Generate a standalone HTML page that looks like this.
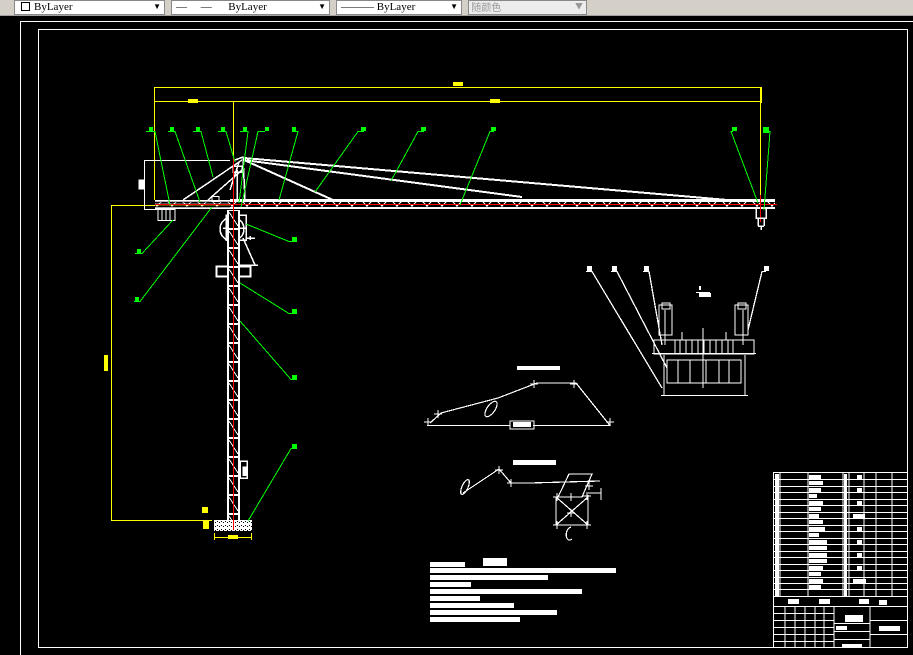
<!DOCTYPE html>
<html><head><meta charset="utf-8"><style>
html,body{margin:0;padding:0;width:913px;height:655px;overflow:hidden;background:#000;font-family:"Liberation Sans","Noto Sans CJK SC",sans-serif}
.tb{position:absolute;left:0;top:0;width:913px;height:15px;background:#d4d0c8;border-bottom:1px solid #a0a0a0}
.dd{position:absolute;top:0;height:13px;background:#fff;border:1px solid #888;font:11px "Liberation Serif",serif;line-height:12px;color:#000}
.ar{position:absolute;right:3px;top:0;font-size:8px}
svg{shape-rendering:crispEdges}
</style></head><body>
<div class="tb">
 <div class="dd" style="left:14px;width:149px"><span style="display:inline-block;width:7px;height:7px;border:1px solid #000;margin:0 4px 0 6px;vertical-align:-1px"></span>ByLayer<span class="ar">▼</span></div>
 <div class="dd" style="left:171px;width:157px"><span style="margin-left:4px">—&nbsp;&nbsp;&nbsp;&nbsp;&nbsp;—&nbsp;&nbsp;&nbsp;&nbsp;&nbsp;&nbsp;ByLayer</span><span class="ar">▼</span></div>
 <div class="dd" style="left:336px;width:124px"><span style="margin-left:4px">———&nbsp;ByLayer</span><span class="ar">▼</span></div>
 <div class="dd" style="left:468px;width:117px;background:#ececec;color:#999;font-family:'Noto Sans CJK SC',sans-serif;font-size:10px">&nbsp;随颜色<span class="ar">▼</span></div>
</div>
<svg width="913" height="655" style="position:absolute;left:0;top:0" xmlns="http://www.w3.org/2000/svg">
<defs>
<pattern id="tw" x="227" y="0" width="13" height="19" patternUnits="userSpaceOnUse">
<rect x="0" y="0" width="13" height="19" fill="#000"/>
<rect x="0" y="0" width="2" height="19" fill="#fff"/>
<rect x="11" y="0" width="2" height="19" fill="#fff"/>
<rect x="0" y="0" width="13" height="2" fill="#fff"/>
<line x1="2" y1="3" x2="11" y2="17" stroke="#fff"/>
<line x1="6" y1="2" x2="6" y2="19" stroke="#fff" stroke-width="0.6"/>
</pattern>
<pattern id="jb" x="0" y="200" width="15" height="9" patternUnits="userSpaceOnUse">
<rect width="15" height="9" fill="#000"/>
<rect x="0" y="0" width="15" height="2" fill="#fff"/>
<rect x="0" y="7" width="15" height="2" fill="#fff"/>
<path d="M3 2 L7 6 L11 2 M7 6 V8" stroke="#fff" fill="none"/>
</pattern>
<pattern id="ht" width="4" height="4" patternUnits="userSpaceOnUse"><rect width="4" height="4" fill="#fff"/><rect x="1" y="1" width="1" height="1" fill="#000"/><rect x="3" y="2" width="1" height="1" fill="#000"/></pattern>
</defs>
<path d="M20.5 655 V21.5 H913" stroke="#fff" fill="none"/>
<rect x="38.5" y="29.5" width="869" height="618" stroke="#fff" fill="none"/>
<g stroke="#ff0" fill="none">
<path d="M154.5 200 V87.5 H761.5 V103"/>
<path d="M154 101.5 H762"/>
<path d="M233.5 101 V205"/>
<path d="M760.5 87 V205"/>
<path d="M111.5 520 V205.5 H233"/>
<path d="M111 520.5 H212"/>
<path d="M214 537.5 H252 M214.5 533 V540 M251.5 533 V540"/>
</g>
<g fill="#ff0">
<rect x="453" y="82" width="10" height="4"/><rect x="188" y="99" width="10" height="4"/><rect x="490" y="99" width="10" height="4"/>
<rect x="228" y="535" width="10" height="4"/><rect x="202" y="507" width="6" height="6"/><rect x="203" y="521" width="6" height="8"/>
<rect x="104" y="355" width="4" height="16"/>
</g>
<g stroke="#fff" fill="none">
<path d="M144 160.5 H230 M144.5 160 V209 M144 209.5 H160"/>
<rect x="139" y="180" width="5" height="9" fill="#fff"/>
<rect x="158" y="209.5" width="17" height="11"/>
<path d="M162 210 V220 M166 210 V220 M170 210 V220"/>
<path d="M155 200.5 H230 M155 208.5 H230 M155 203.5 H230"/>
<rect x="212" y="196.5" width="7" height="5"/>
<path d="M183 200 L242 160 M208 200 L242 170" stroke-width="1.5"/>
<path d="M244 158 L762 203 M244 160 L333 200 M244 160 L522 197" stroke-width="2"/>
</g>
<rect x="230" y="199" width="545" height="10" fill="url(#jb)"/>
<rect x="155" y="200" width="75" height="9" fill="url(#jb)" opacity="0.7"/>
<g stroke="#fff" fill="none" stroke-width="1.5">
<path d="M235 160 L243 157 L245 200 M237 170 V200 M239 162 L230 190"/>
<rect x="233" y="166" width="9" height="6"/>
<circle cx="232" cy="229" r="12"/>
<rect x="226" y="215" width="20" height="25"/>
<path d="M223 228 H246 M243 238 L255 265 M240 265 H258"/>
<rect x="216.5" y="266.5" width="34" height="10" stroke-width="2"/>
<path d="M246 238 H255 M250 236 V240"/>
<rect x="240" y="461" width="7" height="17"/><rect x="243" y="467" width="3" height="8" fill="#fff"/>
</g>
<rect x="227" y="210" width="13" height="311" fill="url(#tw)"/>
<rect x="214" y="520" width="38" height="11" fill="url(#ht)"/>
<path d="M155 204.5 H777 M233.5 158 V530 M760.5 195 V222" stroke="#f00" stroke-width="1.2"/>
<path d="M756 209 V218 H766 V209 M758 218 V226 M764 218 V226 M758 226 H764 M761 226 V230" stroke="#fff" fill="none" stroke-width="1.5"/>
<g stroke="#0f0" fill="none">
<path d="M146 131.5 H155 L170 205"/><path d="M168 131.5 H175 L200 202"/><path d="M193 131.5 H201 L213 177"/>
<path d="M218 131.5 H226 L235 162"/><path d="M240 131.5 H248 L239 203"/><path d="M265 131.5 H258 L241 207"/>
<path d="M292 131.5 H298 L279 200"/><path d="M364 131.5 H358 L315 192"/><path d="M424 131.5 H418 L391 181"/>
<path d="M494 131.5 H490 L460 205"/><path d="M733 131.5 H731 L758 203"/><path d="M768 131.5 H770 L764 210"/>
<path d="M135 253.5 H142 L173 220"/><path d="M134 301.5 H140 L212 207"/>
<path d="M297 241.5 H289 L246 224"/><path d="M297 313.5 H289 L240 283"/><path d="M297 379.5 H291 L240 321"/><path d="M297 448.5 H291 L248 521"/>
</g>
<g fill="#0f0">
<rect x="149" y="127" width="4" height="4"/><rect x="170" y="127" width="4" height="4"/><rect x="196" y="127" width="4" height="4"/>
<rect x="221" y="127" width="4" height="4"/><rect x="243" y="127" width="4" height="4"/><rect x="265" y="127" width="4" height="4"/>
<rect x="292" y="127" width="4" height="4"/><rect x="361" y="127" width="5" height="4"/><rect x="421" y="127" width="5" height="4"/>
<rect x="491" y="127" width="5" height="4"/><rect x="732" y="127" width="5" height="4"/><rect x="763" y="127" width="6" height="6"/>
<rect x="137" y="249" width="4" height="4"/><rect x="135" y="297" width="4" height="4"/>
<rect x="292" y="237" width="5" height="5"/><rect x="292" y="309" width="5" height="5"/><rect x="292" y="375" width="5" height="5"/><rect x="292" y="444" width="5" height="5"/>
</g>
<g stroke="#fff" fill="none" stroke-width="1.3">
<path d="M586 271.5 H592 L662 388 M611 271.5 H617 L667 368 M643 271.5 H649 L662 345 M766 271.5 H762 L748 330"/>
<path d="M696 292.5 H710"/>
<rect x="659" y="305" width="13" height="30"/><rect x="735" y="305" width="13" height="30"/>
<rect x="662" y="303" width="8" height="6"/><rect x="738" y="303" width="8" height="6"/>
<rect x="654" y="340" width="100" height="14"/>
<path d="M675 340 V354 M680 340 V354 M686 340 V354 M692 340 V354 M698 340 V354 M704 340 V354 M710 340 V354 M716 340 V354 M722 340 V354 M728 340 V354 M733 340 V354"/>
<rect x="667" y="360" width="74" height="23"/>
<path d="M678 360 V383 M690 360 V383 M706 360 V383 M719 360 V383 M729 360 V383"/>
<path d="M661 395.5 H748 M664 355 V395 M745 355 V395 M703 328 V388 M665 310 V345 M743 310 V345"/>
<path d="M682 332 V340 M726 332 V340 M652 353.5 H756"/>
</g>
<g fill="#fff"><rect x="699" y="286" width="2" height="4"/><rect x="699" y="293" width="12" height="4"/><rect x="587" y="266" width="5" height="5"/><rect x="612" y="266" width="5" height="5"/><rect x="644" y="266" width="5" height="5"/><rect x="764" y="266" width="5" height="5"/></g>
<g fill="#fff"><rect x="517" y="366" width="43" height="4"/><rect x="513" y="460" width="43" height="5"/><rect x="513" y="422" width="18" height="5"/></g>
<g stroke="#fff" fill="none" stroke-width="1.2">
<path d="M427 425.5 H510 M533 425.5 H610 L576 383 H537 L498 398 L441 413 L430 423"/>
<rect x="510" y="421" width="24" height="8"/>
<ellipse cx="491" cy="409" rx="4" ry="9" transform="rotate(35 491 409)"/>
<path d="M463 493 L499 469 L511 483 H530 L600 481"/>
<ellipse cx="465" cy="487" rx="3" ry="8" transform="rotate(25 465 487)"/>
<path d="M569 474 H592 L582 497 H558 Z M556 497 V525 M588 495 V525 M556 525 H590 M556 497 L588 525 M588 497 L556 525 M588 493 H601 M601 488 V500"/>
<path d="M571 527 C563 530 566 544 572 539"/>
</g>
<g stroke="#fff" fill="none" stroke-width="0.8">
<path d="M424 422 h8 M428 418 v8 M434 414 h8 M438 410 v8 M530 384 h8 M534 380 v8 M570 384 h8 M574 380 v8 M606 422 h8 M610 418 v8 M495 470 h8 M499 466 v8 M507 483 h8 M511 479 v8 M553 497 h8 M557 493 v8 M583 496 h8 M587 492 v8 M567 497 h8 M571 493 v8 M567 513 h8 M571 509 v8 M553 525 h8 M557 521 v8 M583 525 h8 M587 521 v8 M585 486 h8 M589 482 v8"/>
</g>
<g fill="#fff">
<rect x="430" y="562" width="35" height="5"/><rect x="483" y="558" width="24" height="8"/>
<rect x="430" y="568" width="186" height="5"/><rect x="430" y="575" width="118" height="5"/><rect x="430" y="582" width="41" height="5"/>
<rect x="430" y="589" width="152" height="5"/><rect x="430" y="596" width="50" height="5"/><rect x="430" y="603" width="84" height="5"/>
<rect x="430" y="610" width="127" height="5"/><rect x="430" y="617" width="90" height="5"/>
</g>
<g stroke="#fff" fill="none">
<rect x="773.5" y="472.5" width="134" height="175"/>
<path d="M780 473 V597 M808 473 V597 M843 473 V597 M849 473 V597 M864 473 V597 M876 473 V597 M892 473 V597"/>
<path d="M773 479.5 H908 M773 486.5 H908 M773 492.5 H908 M773 499.5 H908 M773 505.5 H908 M773 512.5 H908 M773 518.5 H908 M773 525.5 H908 M773 531.5 H908 M773 538.5 H908 M773 544.5 H908 M773 551.5 H908 M773 557.5 H908 M773 564.5 H908 M773 570.5 H908 M773 577.5 H908 M773 583.5 H908 M773 589.5 H908 M773 596.5 H908 M773 606.5 H908"/>
<path d="M834 606 V648 M870 606 V648 M834 623.5 H870 M834 631.5 H870 M834 639.5 H870 M870 620.5 H908 M870 634.5 H908"/>
<path d="M773 613.5 H834 M773 620.5 H834 M773 627.5 H834 M773 634.5 H834 M773 641.5 H834 M785 606 V648 M795 606 V648 M805 606 V648 M815 606 V648 M824 606 V648"/>
</g>
<g fill="#fff">
<rect x="775" y="474" width="4" height="122"/>
<rect x="809" y="475" width="12" height="4"/><rect x="809" y="481" width="14" height="4"/><rect x="809" y="488" width="12" height="4"/><rect x="809" y="494" width="8" height="4"/><rect x="809" y="501" width="14" height="4"/><rect x="809" y="507" width="12" height="4"/><rect x="809" y="514" width="10" height="4"/><rect x="809" y="520" width="14" height="4"/><rect x="809" y="527" width="16" height="4"/><rect x="809" y="533" width="10" height="4"/><rect x="809" y="540" width="18" height="4"/><rect x="809" y="546" width="18" height="4"/><rect x="809" y="553" width="18" height="4"/><rect x="809" y="559" width="18" height="4"/><rect x="809" y="566" width="14" height="4"/><rect x="809" y="572" width="12" height="4"/><rect x="809" y="579" width="14" height="4"/><rect x="809" y="585" width="12" height="4"/>
<rect x="844" y="474" width="3" height="122"/>
<rect x="857" y="475" width="5" height="4"/><rect x="857" y="488" width="5" height="4"/><rect x="857" y="501" width="5" height="4"/><rect x="853" y="514" width="12" height="4"/><rect x="857" y="527" width="5" height="4"/><rect x="857" y="540" width="5" height="4"/><rect x="857" y="553" width="5" height="4"/><rect x="857" y="566" width="5" height="4"/><rect x="853" y="579" width="13" height="4"/>
<rect x="788" y="599" width="11" height="5"/><rect x="819" y="599" width="11" height="5"/><rect x="859" y="599" width="10" height="5"/><rect x="879" y="600" width="8" height="5"/>
<rect x="845" y="615" width="18" height="7"/><rect x="879" y="626" width="21" height="5"/><rect x="842" y="644" width="20" height="4"/><rect x="836" y="626" width="11" height="4"/>
</g>
</svg>
</body></html>
